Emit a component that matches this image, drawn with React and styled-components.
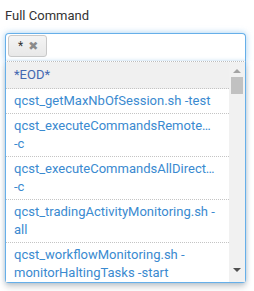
import React from "react";
import styled, { createGlobalStyle } from "styled-components";

const GlobalStyle = createGlobalStyle`
  html, body {
    margin: 0;
    padding: 0;
    background: #ffffff;
    font-family: Roboto, "Liberation Sans", Arial, sans-serif;
  }
`;

const commands = [
  { lines: ["*EOD*"], active: true },
  { lines: ["qcst_getMaxNbOfSession.sh -test"] },
  { lines: ["qcst_executeCommandsRemoteMW.sh", "-c"] },
  { lines: ["qcst_executeCommandsAllDirectories.sh", "-c"] },
  { lines: ["qcst_tradingActivityMonitoring.sh -", "all"] },
  { lines: ["qcst_workflowMonitoring.sh -", "monitorHaltingTasks -start"] },
];

const Page = styled.div`
  position: relative;
  width: 254px;
  height: 291px;
  padding: 5px 8px 0 5px;
  box-sizing: border-box;
  overflow: hidden;
`;

const Label = styled.div`
  font-size: 13px;
  line-height: 16px;
  color: #333333;
  margin: 3px 0 9px 0;
`;

const Field = styled.div`
  position: relative;
  width: 241px;
`;

const Choices = styled.div`
  height: 28px;
  box-sizing: border-box;
  border: 1px solid #66afe9;
  border-bottom: none;
  border-radius: 4px 4px 0 0;
  background: #ffffff;
  padding: 1px 2px;
  box-shadow: 0 0 6px rgba(102, 175, 233, 0.6);
`;

const Tag = styled.span`
  display: inline-flex;
  align-items: center;
  gap: 5px;
  height: 22px;
  box-sizing: border-box;
  padding: 0 8px 0 9px;
  border: 1px solid #c8c8c8;
  border-radius: 3px;
  background: linear-gradient(#f4f4f4, #e8e8e8);
  font-size: 12px;
  color: #333333;
`;

const Remove = styled.span`
  font-size: 12px;
  color: #8a8a8a;
  font-family: "DejaVu Sans", sans-serif;
`;

const Dropdown = styled.div`
  position: absolute;
  left: 0;
  top: 28px;
  width: 241px;
  box-sizing: border-box;
  border: 1px solid #66afe9;
  border-top: 1px dotted #bdbdbd;
  border-radius: 0 0 4px 4px;
  background: #ffffff;
  display: flex;
  box-shadow: 0 4px 6px rgba(0, 0, 0, 0.18), 0 0 4px rgba(102, 175, 233, 0.4);
  z-index: 2;
`;

const List = styled.ul`
  list-style: none;
  margin: 0;
  padding: 0;
  flex: 1;
  min-width: 0;
  height: 220px;
  overflow: hidden;
`;

const Item = styled.li`
  padding: ${(p) => (p.$active ? "4px 10px 4px 8px" : "3px 10px 3px 8px")};
  border-bottom: 1px dotted #c4c4c4;
  background: ${(p) => (p.$active ? "#f0f0f0" : "#ffffff")};
  color: ${(p) => (p.$active ? "#4468b0" : "#3a8ad0")};
  font-size: 13px;
  line-height: 18px;
`;

const Line = styled.div`
  white-space: nowrap;
  overflow: hidden;
  text-overflow: ellipsis;
`;

const Scrollbar = styled.div`
  width: 16px;
  flex: none;
  background: #f1f1f1;
  display: flex;
  flex-direction: column;
  align-items: center;
`;

const Arrow = styled.div`
  width: 0;
  height: 0;
  margin: ${(p) => (p.$down ? "auto 0 10px 0" : "7px 0 4px 0")};
  border-left: 4px solid transparent;
  border-right: 4px solid transparent;
  ${(p) =>
    p.$down
      ? "border-top: 4px solid #505050;"
      : "border-bottom: 4px solid #a3a3a3;"}
`;

const Thumb = styled.div`
  width: 12px;
  height: 17px;
  background: #c1c1c1;
`;

const BackRow = styled.div`
  height: ${(p) => p.$h}px;
  border-bottom: 1px solid #ececec;
`;

export default function App() {
  return (
    <>
      <GlobalStyle />
      <Page>
        <Label>Full Command</Label>
        <Field>
          <Choices>
            <Tag>
              * <Remove>✖</Remove>
            </Tag>
          </Choices>
          <Dropdown>
            <List>
              {commands.map((c, i) => (
                <Item key={i} $active={c.active}>
                  {c.lines.map((l, j) => (
                    <Line key={j}>{l}</Line>
                  ))}
                </Item>
              ))}
            </List>
            <Scrollbar>
              <Arrow />
              <Thumb />
              <Arrow $down />
            </Scrollbar>
          </Dropdown>
        </Field>
        <BackRow $h={146} />
      </Page>
    </>
  );
}
